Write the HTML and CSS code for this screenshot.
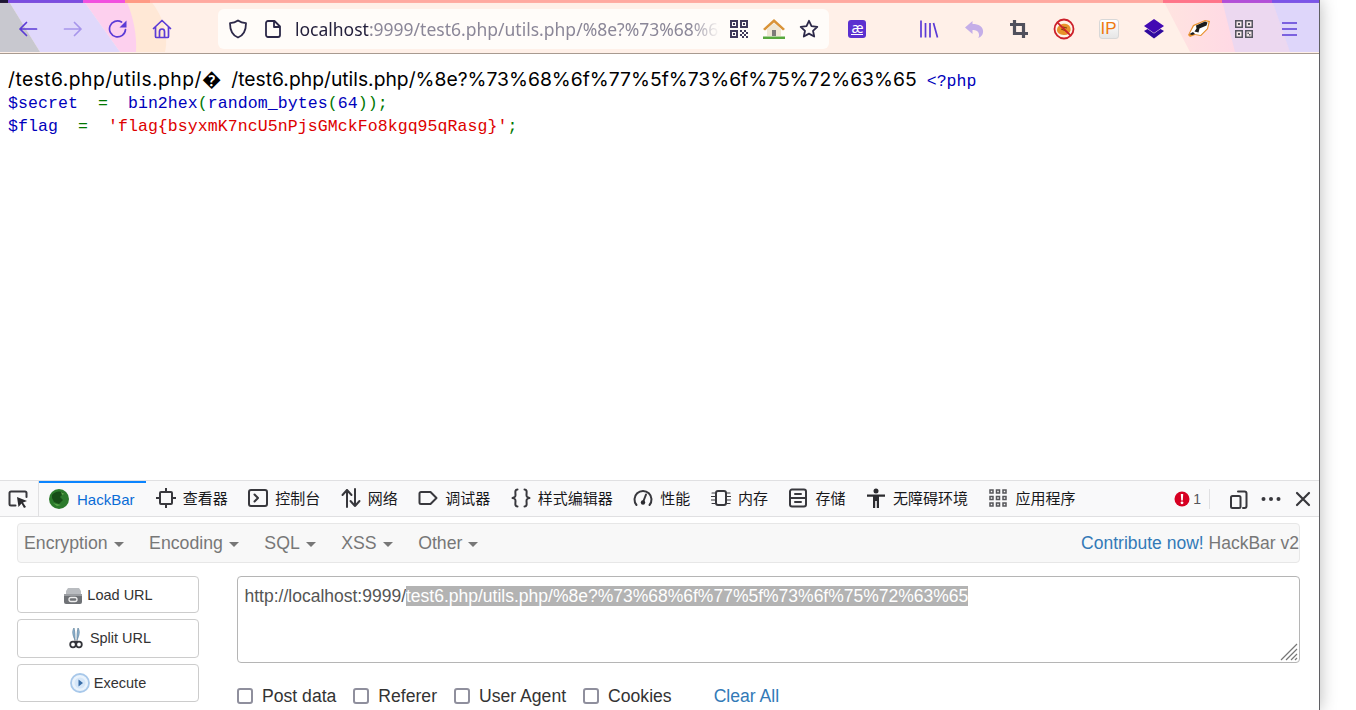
FILE: index.html
```html
<!DOCTYPE html>
<html lang="zh">
<head>
<meta charset="utf-8">
<title>test6.php</title>
<link rel="stylesheet" href="styles.css">
</head>
<body>
<div class="window">
  <header class="toolbar">
    <svg class="backdrop" viewBox="0 0 1319 54" preserveAspectRatio="none">
      <defs><linearGradient id="rp" x1="0" x2="1" y1="0" y2="0"><stop offset="0" stop-color="#ffe4e0"/><stop offset=".5" stop-color="#ffd8e5"/></linearGradient></defs>
      <rect width="1319" height="54" fill="#fff0e8"/>
      <path d="M125 0H150C166 20 168 40 165 53H135Z" fill="#ffe8d6"/>
      <path d="M83 0H126C134 18 137 38 136 53H120Z" fill="#fdd0ee"/>
      <path d="M8 0H83L120 53H40Z" fill="#e0d8fb"/>
      <path d="M0 0H8L40 53H0Z" fill="#c8c8cf"/>
      <path d="M1163 0H1319V53H1190Z" fill="url(#rp)"/>
      <path d="M1222 0H1319V53H1235Z" fill="#ecd8f0"/>
      <path d="M1272 0H1319V53H1290Z" fill="#ded6fa"/>
      <rect width="1319" height="3" fill="#ffa9a0"/>
      <rect width="150" height="3" fill="#ff9a84"/>
      <rect x="83" width="42" height="3" fill="#f24fe0"/>
      <rect x="8" width="75" height="3" fill="#7a4de0"/>
      <rect width="8" height="3" fill="#1d1633"/>
      <rect x="1163" width="60" height="3" fill="#ff7489"/>
      <rect x="1222" width="50" height="3" fill="#b24fd8"/>
      <rect x="1272" width="47" height="3" fill="#7a55e8"/>
    </svg>
    <div class="tb-group tb-left">
      <span class="tb-btn"><svg class="ic20" viewBox="0 0 20 20"><path class="st-p" d="M18.500 10H2M8.500 3.500 2 10l6.500 6.500"/></svg></span>
      <span class="tb-btn"><svg class="ic20 dim" viewBox="0 0 20 20"><path class="st-p" d="M1.500 10H18M11.500 3.500 18 10l-6.500 6.500"/></svg></span>
      <span class="tb-btn"><svg class="ic20" viewBox="0 0 20 20"><path class="st-p" d="M17.500 10.500A8 8 0 1 1 13.500 3"/><path class="fi-p" d="M18.500 1.500V8.500H11.500Z"/></svg></span>
      <span class="tb-btn"><svg class="ic20" viewBox="0 0 20 20"><path class="st-p" d="M1.500 9.500 10 1.500l8.500 8M3.500 8v9.500a1 1 0 0 0 1 1h11a1 1 0 0 0 1-1V8M7.500 18.500v-6a2.500 2.500 0 0 1 5 0v6"/></svg></span>
    </div>
    <div class="urlbar">
      <svg class="ic20 url-ic" viewBox="0 0 20 20"><path class="st-d" d="M10 1.500c2.500 1.800 5 2.500 8 2.700 0 6-1 11.500-8 14.300-7-2.800-8-8.300-8-14.300 3-.2 5.500-.9 8-2.700Z"/></svg>
      <svg class="ic18 url-ic2" viewBox="0 0 18 18"><path class="st-d" d="M2 3a2 2 0 0 1 2-2h6.500L16 6.500V15a2 2 0 0 1-2 2H4a2 2 0 0 1-2-2ZM10 1v6h6"/></svg>
      <div class="url-text"><span class="url-host">localhost</span>:9999/test6.php/utils.php/%8e?%73%68%6f%77%5f%73%6f%75%72%63%65</div>
      <svg class="ic18 url-act" viewBox="0 0 18 18"><path fill="#3f3a5a" d="M0 0h8v8H0ZM2 2v4h4V2ZM10 0h8v8h-8ZM12 2v4h4V2ZM3 3h2v2H3ZM13 3h2v2h-2ZM0 10h8v8H0ZM2 12v4h4v-4ZM3 13h2v2H3ZM10 10h2v2h-2ZM14 10h2v2h-2ZM12 12h2v2h-2ZM16 12h2v2h-2ZM10 14h2v2h-2ZM14 14h2v2h-2ZM12 16h2v2h-2ZM16 16h2v2h-2Z"/></svg>
      <svg class="ic22 url-act2" viewBox="0 0 22 22"><path fill="#d99338" d="M11 1 0 11l2 1.500L11 4.500l9 8 2-1.500Z"/><path fill="#efe6d4" d="M4 11 11 5l7 6v7H4Z"/><path fill="#7c7a78" d="M9 12h4v6H9Z"/><path fill="#57a83c" d="M0 18.500h22V21H0Z"/></svg>
      <svg class="ic20 url-act3" viewBox="0 0 20 20"><path class="st-d" d="m10 1.800 2.500 5.300 5.800.7-4.300 4 1.200 5.700-5.200-2.900-5.200 2.900 1.200-5.700-4.300-4 5.800-.7Z"/></svg>
    </div>
    <span class="tb-btn ae-btn"><span class="ae">æ</span></span>
    <div class="tb-group tb-right">
      <span class="tb-btn"><svg class="ic20" viewBox="0 0 20 20"><path class="st-p th" d="M2 1.500v17M6.500 4v14.500M11 4v14.500M14.500 4l4 14.500"/></svg></span>
      <span class="tb-btn"><svg class="ic20" viewBox="0 0 20 20"><path fill="#c4aee8" d="M8.500 2 1 8.500l7.500 6.500v-4c3.500 0 6 1 6.500 4.500.2 1 0 2.500-1 3.500 3.500-1 5.500-4 5-7.500-.6-4-4-6.500-10.500-6.500Z"/></svg></span>
      <span class="tb-btn"><svg class="ic18" viewBox="0 0 18 18"><path fill="none" stroke="#50505c" stroke-width="3.200" d="M4.500 0v13.500H18M0 4.500h13.500V18"/></svg></span>
      <span class="tb-btn"><svg class="ic22" viewBox="0 0 22 22"><circle cx="11" cy="11" r="9.500" fill="#fff3e6" stroke="#cc1f2a" stroke-width="1.800"/><path fill="#e8922a" d="M4 12c0-4 5-7 9-6 3.500.7 5 3.500 4.500 6.500-.5 3-3.500 5-7 4.500S4 15 4 12Z"/><path stroke="#7a4310" stroke-width="1" fill="none" d="M8 11l5 2M10 9l4 1"/><path stroke="#cc1f2a" stroke-width="1.800" d="M4.300 4.300 17.700 17.700"/></svg></span>
      <span class="tb-btn"><span class="ip">IP</span></span>
      <span class="tb-btn"><svg class="ic22" viewBox="0 0 22 22"><path fill="#2f0a9e" d="M1 13 4.500 11 11 15.500 17.500 11 21 13 11 20.500Z"/><path fill="#4209b3" d="M11 1 21 8 11 15 1 8Z"/></svg></span>
      <span class="tb-btn"><svg class="ic22" viewBox="0 0 22 22"><path fill="#e8902a" d="M0 17 5 7 17 2l5 1-2 8-7 7-6-1-5 2Z"/><path fill="#fff" d="M1.500 16 6 8 17 3.200l3.500.8-1.500 6.500-6.500 6.500-6-1Z"/><path fill="#1c1c1c" d="M8 7.500 17 3.500l2.500 1-1 3-7 3-1 4-4-1 2-3ZM1.500 16 5 14l2 2-3 1Z"/></svg></span>
      <span class="tb-btn"><svg class="ic18" viewBox="0 0 18 18"><path fill="#55555f" d="M0 0h8v8H0ZM10 0h8v8h-8ZM0 10h8v8H0ZM10 10h8v8h-8Z"/><path fill="#f5e8ea" d="M1.500 1.500h5v5h-5ZM11.500 1.500h5v5h-5ZM1.500 11.500h5v5h-5ZM11.500 11.500h5v5h-5Z"/><path fill="#55555f" d="M3 3h2v2H3ZM13 3h2v2h-2ZM3 13h2v2H3ZM12.500 12.500h1.500v1.500h-1.500ZM14 14h1.500v1.500H14Z"/></svg></span>
      <span class="tb-btn"><svg class="ic20" viewBox="0 0 20 20"><path class="st-p th" d="M3 4h15M3 10h15M3 16h15"/></svg></span>
    </div>
  </header>

  <main class="page">
    <div class="code">
      <div class="line first"><span class="plain part1">/test6.php/utils.php/�</span> <span class="plain">/test6.php/utils.php/%8e?%73%68%6f%77%5f%73%6f%75%72%63%65</span><span class="c-b php-open">&lt;?php</span></div>
      <div class="line"><span class="c-b">$secret&nbsp;&nbsp;</span><span class="c-g">=</span><span class="c-b">&nbsp;&nbsp;bin2hex</span><span class="c-t">(</span><span class="c-b">random_bytes</span><span class="c-t">(</span><span class="c-b">64</span><span class="c-t">));</span></div>
      <div class="line"><span class="c-b">$flag&nbsp;&nbsp;</span><span class="c-g">=</span><span class="c-b">&nbsp;&nbsp;</span><span class="c-r">'flag{bsyxmK7ncU5nPjsGMckFo8kgq95qRasg}'</span><span class="c-t">;</span></div>
    </div>
  </main>

  <section class="devtools">
    <nav class="dt-tabs">
      <span class="dt-pick"><svg class="ic20" viewBox="0 0 20 20"><path class="st-k" d="M7.500 16.500H3a1.500 1.500 0 0 1-1.500-1.500V4A1.500 1.500 0 0 1 3 2.500h14A1.500 1.500 0 0 1 18.500 4v4"/><path fill="#2b2b2f" d="m9 8 10 4-4 1.500 3 4.500-2 1-2.500-4.500L10.500 18Z"/></svg></span>
      <span class="dt-tab active"><svg class="ic20 hb-ic" viewBox="0 0 20 20"><circle cx="10" cy="10" r="10" fill="#2c7a2c"/><path fill="#174d17" d="M3 6c3-4 9-5 13-1l-3 1-2 2 3 3-4 4-5-2-2-4Z"/><path fill="#5aa64a" d="M12 3l4 2-3 1ZM4 14l4 3 4-1-5-1Z"/></svg><span>HackBar</span></span>
      <span class="dt-tab"><svg class="wide" viewBox="0 0 20 20"><path class="st-k" d="M5 4h10a1 1 0 0 1 1 1v10a1 1 0 0 1-1 1H5a1 1 0 0 1-1-1V5a1 1 0 0 1 1-1ZM10 .5V4M10 16v3.500M.5 10H4M16 10h3.500"/></svg><span class="cjk">查看器</span></span>
      <span class="dt-tab"><svg class="wide" viewBox="0 0 20 20"><path class="st-k" d="M3 2h14a2 2 0 0 1 2 2v12a2 2 0 0 1-2 2H3a2 2 0 0 1-2-2V4a2 2 0 0 1 2-2ZM6.500 6.500 10 10l-3.500 3.500"/></svg><span class="cjk">控制台</span></span>
      <span class="dt-tab"><svg class="wide" viewBox="0 0 20 20"><path class="st-k" d="M6 19V2M1.500 7 6 2l4.500 5M14 1v17M9.500 13l4.500 5 4.500-5"/></svg><span class="cjk">网络</span></span>
      <span class="dt-tab"><svg class="wide" viewBox="0 0 20 20"><path class="st-k" d="M3 4h9.500l6 6-6 6H3a1.500 1.500 0 0 1-1.500-1.500v-9A1.500 1.500 0 0 1 3 4Z"/></svg><span class="cjk">调试器</span></span>
      <span class="dt-tab"><svg class="wide" viewBox="0 0 20 20"><path class="st-k" d="M6.500 1.500C3.500 1.500 4.500 5 4.500 7S4 9.500 1.500 10c2.500.5 3 1 3 3s-1 5.500 2 5.500M13.500 1.500c3 0 2 3.500 2 5.500s.5 2.500 3 3c-2.500.5-3 1-3 3s1 5.500-2 5.500"/></svg><span class="cjk">样式编辑器</span></span>
      <span class="dt-tab"><svg class="wide" viewBox="0 0 20 20"><path class="st-k" d="M3.500 17A8.500 8.500 0 1 1 16.500 17"/><path class="st-k" d="M13 6.500 10.500 13"/><circle cx="10" cy="14.500" r="2.200" fill="#2b2b2f"/></svg><span class="cjk">性能</span></span>
      <span class="dt-tab"><svg class="wide" viewBox="0 0 20 20"><path class="st-k" d="M7 3h6a2 2 0 0 1 2 2v10a2 2 0 0 1-2 2H7a2 2 0 0 1-2-2V5a2 2 0 0 1 2-2Z"/><path class="st-k thin" d="M1 5h3M0 8.500h4M0 12h4M1 15.500h3M16 5h3M16 8.500h4M16 12h4M16 15.500h3"/></svg><span class="cjk">内存</span></span>
      <span class="dt-tab"><svg class="wide" viewBox="0 0 20 20"><path class="st-k" d="M4 1.500h12a2 2 0 0 1 2 2v13a2 2 0 0 1-2 2H4a2 2 0 0 1-2-2v-13a2 2 0 0 1 2-2ZM2 10h16M7 6h6M7 14h6"/></svg><span class="cjk">存储</span></span>
      <span class="dt-tab"><svg class="wide" viewBox="0 0 20 20"><circle cx="10" cy="3" r="2.500" fill="#2b2b2f"/><path fill="#2b2b2f" d="M1 6.500h18v2.300h-6V20h-2.200v-7h-1.600v7H7V8.800H1Z"/></svg><span class="cjk">无障碍环境</span></span>
      <span class="dt-tab"><svg class="wide" viewBox="0 0 20 20"><path fill="none" stroke="#55555a" stroke-width="1.500" d="M2 2h3v3H2ZM8.500 2h3v3h-3ZM15 2h3v3h-3ZM2 8.500h3v3H2ZM8.500 8.500h3v3h-3ZM15 8.500h3v3h-3ZM2 15h3v3H2ZM8.500 15h3v3h-3ZM15 15h3v3h-3Z"/></svg><span class="cjk">应用程序</span></span>
      <div class="dt-right">
        <span class="err"><svg class="ic16" viewBox="0 0 16 16"><circle cx="8" cy="8" r="7.500" fill="#d70022"/><path fill="#fff" d="M6.800 3h2.400l-.4 6.500H7.200Z"/><circle cx="8" cy="11.800" r="1.400" fill="#fff"/></svg><span>1</span></span>
        <span class="dt-sep"></span>
        <span class="dt-act"><svg class="ic20" viewBox="0 0 20 20"><path class="st-k" d="M9 2.500h6.500a2 2 0 0 1 2 2V17a2 2 0 0 1-2 2H14M3.500 7h6.500a1.500 1.500 0 0 1 1.500 1.500v9A1.500 1.500 0 0 1 10 19H3.500A1.500 1.500 0 0 1 2 17.500v-9A1.500 1.500 0 0 1 3.500 7Z"/></svg></span>
        <span class="dt-act"><svg class="ic20" viewBox="0 0 20 20"><circle cx="2.500" cy="10" r="2" fill="#38383d"/><circle cx="10" cy="10" r="2" fill="#38383d"/><circle cx="17.500" cy="10" r="2" fill="#38383d"/></svg></span>
        <span class="dt-act"><svg class="ic16" viewBox="0 0 16 16"><path class="st-k x" d="m2 2 12 12M14 2 2 14"/></svg></span>
      </div>
    </nav>

    <div class="hackbar">
      <div class="hb-nav">
        <span class="dd">Encryption<i class="caret"></i></span>
        <span class="dd">Encoding<i class="caret"></i></span>
        <span class="dd">SQL<i class="caret"></i></span>
        <span class="dd">XSS<i class="caret"></i></span>
        <span class="dd">Other<i class="caret"></i></span>
        <span class="hb-brand"><a class="link">Contribute now!</a> HackBar v2</span>
      </div>
      <div class="hb-main">
        <div class="hb-btns">
          <button class="hb-btn h37"><svg class="ic20" viewBox="0 0 20 20"><path fill="#b9bcc0" d="M3 6 5 3h11l2 3v3H3Z"/><path fill="#6f7276" d="M1 9h18v8a2 2 0 0 1-2 2H3a2 2 0 0 1-2-2Z"/><path fill="#9a9da1" d="M1 9h18v2H1Z"/><rect x="6" y="12.500" width="8" height="4" rx="2" fill="none" stroke="#eee" stroke-width="1.300"/></svg><span>Load URL</span></button>
          <button class="hb-btn h39"><svg class="ic22" viewBox="0 0 22 22"><path fill="#8fb7d6" stroke="#5d7f9a" stroke-width=".7" d="M9 1c-2 3-1.500 7 1 12 0-4 0-8-1-12ZM13 1c2 3 1.500 7-1 12 0-4 0-8 1-12Z"/><circle cx="8" cy="17.500" r="2.800" fill="none" stroke="#33343a" stroke-width="1.800"/><circle cx="14" cy="17.500" r="2.800" fill="none" stroke="#33343a" stroke-width="1.800"/><path stroke="#33343a" stroke-width="1.800" d="M9 14.500h4"/></svg><span>Split URL</span></button>
          <button class="hb-btn h38"><svg class="ic20" viewBox="0 0 20 20"><circle cx="10" cy="10" r="9" fill="#eaf3fc" stroke="#a8c8ea" stroke-width="1.800"/><circle cx="10" cy="10" r="5.500" fill="#d5e6f8"/><path fill="#3a6ea8" d="M8.500 6.500 13 10l-4.500 3.500Z"/></svg><span>Execute</span></button>
        </div>
        <div class="hb-form">
          <div class="hb-url">http://localhost:9999/<span class="sel">test6.php/utils.php/%8e?%73%68%6f%77%5f%73%6f%75%72%63%65</span>
            <svg class="grip" viewBox="0 0 18 18"><path stroke="#777" stroke-width="1.200" d="M1 17 17 1M6 17 17 6M11 17l6-6M15 17l2-2"/></svg>
          </div>
          <div class="hb-opts">
            <label class="opt"><input type="checkbox">Post data</label>
            <label class="opt"><input type="checkbox">Referer</label>
            <label class="opt"><input type="checkbox">User Agent</label>
            <label class="opt"><input type="checkbox">Cookies</label>
            <a class="link clear">Clear All</a>
          </div>
        </div>
      </div>
    </div>
  </section>
</div>
</body>
</html>
```
FILE: styles.css
```css
* { box-sizing: border-box; }
html, body { margin: 0; height: 100%; background: #fff; overflow: hidden; }
.window {
  width: 1320px; height: 710px; display: flex; flex-direction: column;
  background: #fff; border-right: 1px solid #5f5f63;
  box-shadow: 0 0 16px rgba(0,0,0,.28);
}
svg { display: block; flex: none; }
.ic16 { width: 16px; height: 16px; }
.ic18 { width: 18px; height: 18px; }
.ic20 { width: 20px; height: 20px; }
.ic22 { width: 22px; height: 22px; }
.dim { opacity: .42; }
.st-p { fill: none; stroke: #5b3bd6; stroke-width: 1.700; stroke-linecap: round; stroke-linejoin: round; }
.st-p.th { stroke-width: 1.700; stroke-linecap: butt; }
.fi-p { fill: #5b3bd6; }
.st-d { fill: none; stroke: #2c2848; stroke-width: 1.800; stroke-linejoin: round; }
.st-k { fill: none; stroke: #38383d; stroke-width: 2; stroke-linejoin: round; stroke-linecap: round; }
.st-k.thin { stroke-width: 1.100; }
.st-k.x { stroke-width: 2.200; }

/* browser toolbar */
.toolbar {
  position: relative; flex: none; height: 54px; display: flex; align-items: center;
  padding: 4px 8px 0 6px; border-bottom: 1px solid #a89a90;
}
.backdrop { position: absolute; inset: 0; width: 100%; height: 53px; }
.tb-group { position: relative; display: flex; }
.tb-left .tb-btn { width: 44.700px; }
.tb-right { margin-left: auto; }
.tb-btn { width: 45px; height: 40px; display: flex; align-items: center; justify-content: center; flex: none; }
.urlbar {
  position: relative; width: 611px; height: 40px; margin-left: 33.200px; display: flex; align-items: center;
  background: #fffcf9; border-radius: 6px; padding: 0 9px 0 10px;
}
.url-ic2 { margin-left: 16px; }
.url-text {
  width: 425px; margin-left: 13px; overflow: hidden; white-space: nowrap; flex: none;
  font: 17.500px/24px "Noto Sans", sans-serif; color: #8b8798;
  -webkit-mask-image: linear-gradient(to right, #000 93%, transparent);
  mask-image: linear-gradient(to right, #000 93%, transparent);
}
.url-host { color: #24203c; }
.url-act { margin-left: 10px; }
.url-act2 { margin-left: 15px; }
.url-act3 { margin-left: 14px; }
.ae-btn { position: relative; margin-left: 6px; }
.ae {
  position: relative; width: 18px; height: 18px; border-radius: 3px; background: #5b30d0; color: #fff; text-align: center;
  font: 14px/15px "Noto Sans", sans-serif;
}
.ae::after { content: ""; position: absolute; left: 3px; right: 3px; bottom: 3px; height: 1px; background: #fff; }
.ip {
  width: 20px; height: 20px; border-radius: 3px; background: linear-gradient(#fff,#e6e6e6); border: 1px solid #d8d8d8;
  color: #f07a10; font: 17px/18px "Liberation Sans", sans-serif; text-align: center;
}

/* page */
.page { flex: 1; min-height: 0; padding: 14px 8px 0; }
.line {
  height: 23px; white-space: nowrap;
  font: 16.550px/23px "Liberation Mono", monospace; letter-spacing: .07px;
}
.line.first { height: 24px; }
.plain { font: 19.300px/23px "Inter", "Noto Sans CJK SC", sans-serif; color: #000; letter-spacing: 0; }
.part1 { letter-spacing: .45px; }
.php-open { margin-left: 10px; }
.c-b { color: #0000bb; }
.c-g { color: #007700; }
.c-r { color: #dd0000; }
.c-t { color: #007700; }

/* devtools */
.devtools { flex: none; height: 230px; display: flex; flex-direction: column; border-top: 1px solid #e0e0e2; }
.dt-tabs {
  flex: none; height: 36px; display: flex; align-items: stretch; background: #f9f9fa;
  border-bottom: 1px solid #e0e0e2; font-size: 15px; color: #18181a;
}
.dt-pick { width: 39px; padding-left: 8px; display: flex; align-items: center; border-right: 1px solid #e0e0e2; }
.dt-tab { display: flex; align-items: center; padding: 0 10.250px 1px; }
.dt-tab > svg { margin-right: 7px; }
.dt-tab > svg.wide { width: 20px; height: 20px; }
.dt-tab.active {
  padding: 0 11px 1px 10px; color: #0a6cd6; border-top: 2px solid #0a84ff;
  font: 15px "Liberation Sans", sans-serif;
}
.dt-tab > svg.hb-ic { margin-right: 8px; }
.cjk { font: 15px/20px "Noto Sans CJK SC", sans-serif; }
.dt-right { margin-left: auto; display: flex; align-items: center; }
.err { display: flex; align-items: center; gap: 3px; font: 14px "Liberation Sans", sans-serif; color: #55555a; }
.dt-sep { width: 1px; height: 20px; background: #e0e0e2; margin: 0 13px 0 8px; }
.dt-act { width: 32px; display: flex; justify-content: center; }

/* hackbar */
.hackbar { flex: 1; padding: 6px 19px 0 17px; font-family: "Liberation Sans", Arial, sans-serif; background: #fff; }
.hb-nav {
  height: 40px; display: flex; align-items: center; gap: 25.500px; padding: 0 0 0 6px;
  background: #f8f8f8; border: 1px solid #e7e7e7; border-radius: 4px; font-size: 17.700px; color: #777;
}
.dd { display: flex; align-items: center; gap: 6px; }
.caret { width: 0; height: 0; border: 5px solid transparent; border-top-color: #777; border-bottom: 0; margin-top: 2px; }
.hb-brand { margin-left: auto; white-space: nowrap; font-size: 17.500px; }
.link { color: #337ab7; }
.hb-main { display: flex; gap: 38px; margin-top: 13px; }
.hb-btns { width: 182px; flex: none; display: flex; flex-direction: column; gap: 6px; }
.hb-btn {
  display: flex; align-items: center; justify-content: center; gap: 4px; padding: 0; width: 100%;
  background: #fff; border: 1px solid #ccc; border-radius: 4px; color: #333;
  font: 14.500px "Liberation Sans", sans-serif;
}
.h37 { height: 37px; }
.h39 { height: 39px; padding-bottom: 1px; gap: 3px; }
.h38 { height: 38px; }
.hb-form { flex: 1; min-width: 0; }
.hb-url {
  position: relative; height: 87px; padding: 9px 6.500px; border: 1px solid #b5b5b5; border-radius: 4px;
  font-size: 17.500px; line-height: 20px; color: #555; white-space: nowrap;
}
.sel { background: #b3b3b3; color: #fff; }
.grip { position: absolute; right: 1px; bottom: 1px; width: 18px; height: 18px; }
.hb-opts { display: flex; align-items: center; height: 24px; margin-top: 21px; font-size: 17.600px; color: #333; }
.opt { display: flex; align-items: center; gap: 9px; margin-right: 17px; }
.opt input {
  appearance: none; -webkit-appearance: none; width: 16px; height: 16px; margin: 0;
  border: 2px solid #8f8f9d; border-radius: 3px; background: #fff;
}
.clear { margin-left: 25px; }
```
